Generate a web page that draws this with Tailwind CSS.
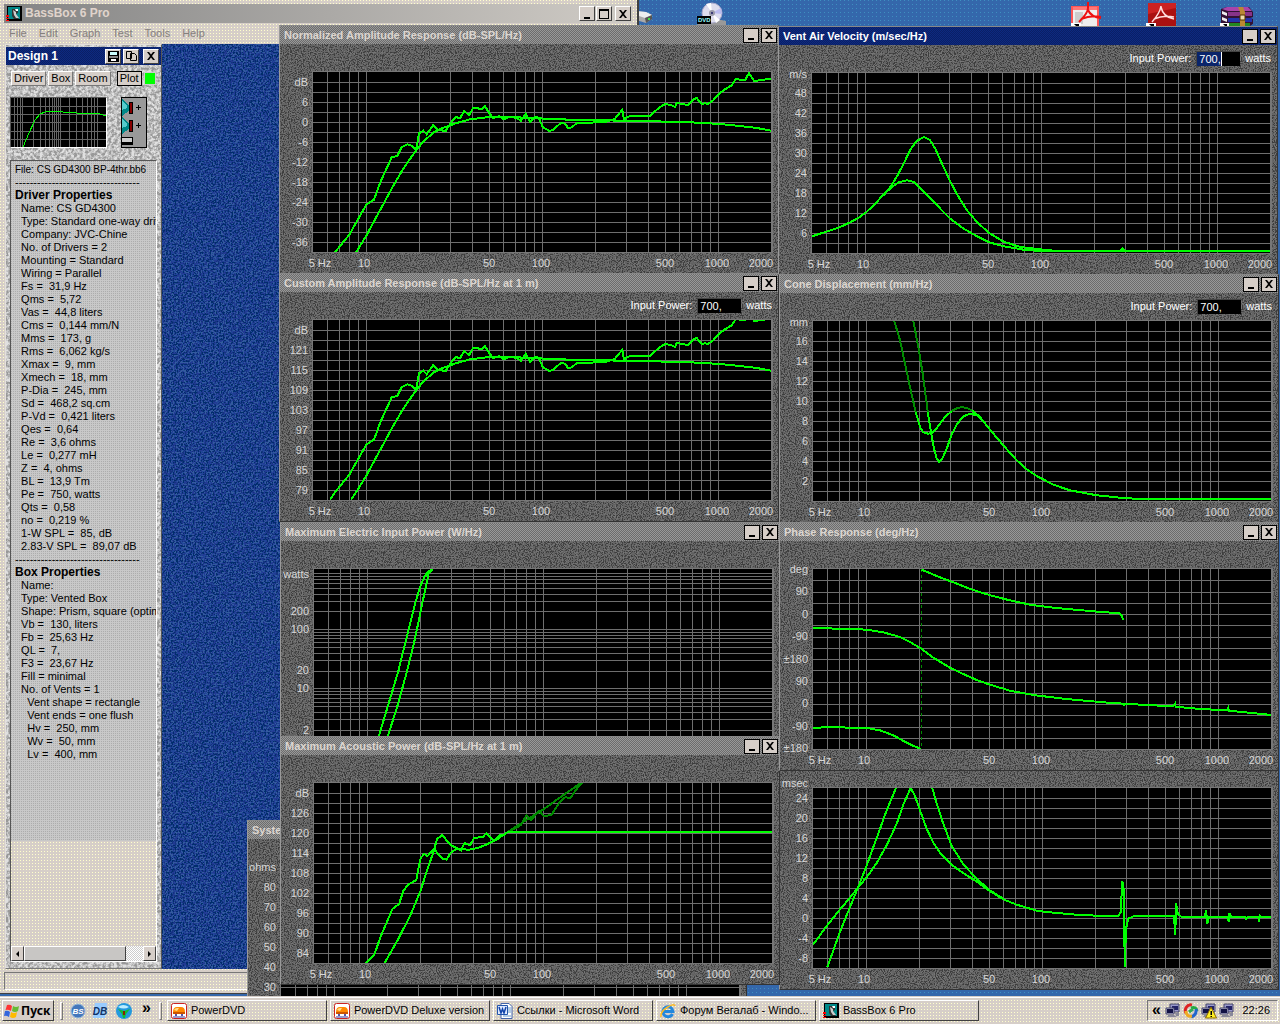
<!DOCTYPE html>
<html lang="ru">
 <head>
  <meta charset="UTF-8"/>
  <meta name="viewport" content="width=device-width, initial-scale=1.0"/>
  <title>BassBox 6 Pro</title>
  <script src="https://cdn.jsdelivr.net/npm/@tailwindcss/browser@4"></script>
 </head>
 <body class="relative h-screen overflow-hidden bg-[#3467ab] bg-[conic-gradient(from_270deg_at_1px_1px,#3e8fc0_90deg,transparent_0)] bg-[length:4px_4px] font-['Liberation_Sans',sans-serif] text-[11px] leading-[13px] text-black">
  <!-- Shared filters and symbols -->
  <svg class="absolute size-0" aria-hidden="true">
   <defs>
    <filter id="speckle" x="0" y="0" width="100%" height="100%" color-interpolation-filters="sRGB">
     <feTurbulence type="fractalNoise" baseFrequency="0.85" numOctaves="2" seed="4"/>
     <feColorMatrix values="3 0 0 0 -1  3 0 0 0 -1  3 0 0 0 -1  0 0 0 0 1"/>
     <feComponentTransfer>
      <feFuncR type="discrete" tableValues=".24 .28 .38 .4 .4 .46"/>
      <feFuncG type="discrete" tableValues=".24 .28 .38 .4 .4 .46"/>
      <feFuncB type="discrete" tableValues=".24 .28 .38 .4 .4 .46"/>
     </feComponentTransfer>
    </filter>
    <filter id="marble" x="0" y="0" width="100%" height="100%" color-interpolation-filters="sRGB">
     <feTurbulence type="fractalNoise" baseFrequency="0.35" numOctaves="3" seed="9"/>
     <feColorMatrix values="3 0 0 0 -1  3 0 0 0 -1  3 0 0 0 -1  0 0 0 0 1"/>
     <feComponentTransfer>
      <feFuncR type="discrete" tableValues=".6 .66 .7 .75 .8 .8 .88"/>
      <feFuncG type="discrete" tableValues=".6 .66 .7 .75 .8 .8 .88"/>
      <feFuncB type="discrete" tableValues=".6 .66 .7 .75 .8 .8 .88"/>
     </feComponentTransfer>
    </filter>
    <filter id="cloth" x="0" y="0" width="100%" height="100%" color-interpolation-filters="sRGB">
     <feTurbulence type="fractalNoise" baseFrequency="0.6" numOctaves="2" seed="2"/>
     <feColorMatrix values="3 0 0 0 -1  3 0 0 0 -1  3 0 0 0 -1  0 0 0 0 1"/>
     <feComponentTransfer>
      <feFuncR type="discrete" tableValues="0 .08 .13 .13 .2"/>
      <feFuncG type="discrete" tableValues=".18 .2 .23 .28 .36"/>
      <feFuncB type="discrete" tableValues=".42 .5 .58 .6 .62"/>
     </feComponentTransfer>
    </filter>
    <symbol id="app" viewBox="0 0 16 16">
     <rect x="1" width="15" height="15" fill="#000"/>
     <rect x="2" y="1" width="12" height="12" fill="#088"/>
     <path d="M6 3h4l2 2v2l-2 1v2l3 3H8L6 10z" fill="#333"/>
     <path d="M7 4l3 2v2l3 4h-3L8 9z" fill="#ccc"/>
     <path d="M9 3h3v2h-2z" fill="#fff"/>
     <path d="M0 9h3v2H0zM0 12h3v1H0zM0 14h3v1H0z" fill="#f00"/>
    </symbol>
    <symbol id="min" viewBox="0 0 12 10">
     <path d="M3 8h6v2H3z" fill="#000"/>
    </symbol>
    <symbol id="max" viewBox="0 0 12 10">
     <path d="M1 0h10v10H1zM2 2v7h8V2z" fill="#000" fill-rule="evenodd"/>
    </symbol>
    <symbol id="cls" viewBox="0 0 12 10">
     <path d="M2 1h2l2 2.500L8 1h2L7 5l3 4H8L6 6.500 4 9H2l3-4z" fill="#000"/>
    </symbol>
    <symbol id="dvd" viewBox="0 0 16 16">
     <rect x=".5" y=".5" width="15" height="15" rx="2" fill="#fff" stroke="#c22"/>
     <path d="M2 9q0-5 4-5h4q4 0 4 5z" fill="#f80"/>
     <path d="M3 7q1-2 3-2h2l-2 3z" fill="#fd8"/>
     <path d="M2 9h12v2H2z" fill="#c50"/>
     <path d="M4 11h2v2H4zM10 11h2v2h-2z" fill="#55a"/>
     <path d="M2 13h12v2H2z" fill="#99c"/>
    </symbol>
    <symbol id="net" viewBox="0 0 16 16">
     <path d="M5 1h9v8H5z" fill="#99c" stroke="#446"/>
     <path d="M7 3h6v4H7z" fill="#226"/>
     <path d="M1 5h8v6H1z" fill="#bbd" stroke="#446"/>
     <path d="M2 6h6v4H2z" fill="#114"/>
     <path d="M3 12h6l3 2H2zM10 10h4v3h-3z" fill="#889"/>
    </symbol>
   </defs>
  </svg>

  <!-- Desktop icons -->
  <svg class="absolute left-[636px] top-[8px]" width="18" height="18" viewBox="0 0 18 18" aria-hidden="true">
   <path d="M0 3l10 1 6 3v4l-6 4-10-3z" fill="#aaa"/><path d="M0 3l10 1 6 3-7 3-9-3z" fill="#eee"/><path d="M9 10l7-3v4l-6 4z" fill="#555"/><path d="M12 10h2v2h-2z" fill="#4d4"/>
  </svg>
  <svg class="absolute left-[696px] top-[2px]" width="32" height="24" viewBox="0 0 32 24" aria-hidden="true">
   <path d="M2 20l14-4 14 3v5H1z" fill="#999"/><circle cx="16" cy="11" r="10" fill="#dde" stroke="#aac"/><path d="M16 11L10 2l5-1zM16 11l8 7-4 3z" fill="#fff"/><path d="M16 11l9-5 1 6z" fill="#bbe"/><circle cx="16" cy="11" r="3" fill="#99a"/><circle cx="16" cy="11" r="1" fill="#226"/>
   <rect x="1" y="14" width="14" height="8" fill="#000"/><text x="2" y="20" font-size="6" font-weight="bold" fill="#9ff">DVD</text>
  </svg>
  <svg class="absolute left-[1071px] top-[2px]" width="32" height="24" viewBox="0 0 32 24" aria-hidden="true">
   <rect x="1" y="5" width="26" height="20" fill="#eee" stroke="#f55" stroke-width="2"/><path d="M2 5h24v3H2z" fill="#f77"/><path d="M4 10h8v12H4z" fill="#ccc"/><path d="M17 0v6q0 5-9 14M17 8q3 7 13 8M10 17q10-4 20-2" fill="none" stroke="#e11" stroke-width="2"/><rect y="21" width="10" height="3" fill="#fff"/><path d="M3 22h5v2H5z" fill="#000"/>
  </svg>
  <svg class="absolute left-[1146px] top-[2px]" width="32" height="24" viewBox="0 0 32 24" aria-hidden="true">
   <rect x="2" y="1" width="28" height="23" fill="#a11"/><path d="M2 1h28v5L2 12z" fill="#c22"/><path d="M15 4q-1 7-9 16M15 5q2 10 13 12M8 17q9-4 20-2" fill="none" stroke="#fdd" stroke-width="1.500"/><rect y="21" width="10" height="3" fill="#fff"/><path d="M3 22h5v2H5z" fill="#000"/>
  </svg>
  <svg class="absolute left-[1220px] top-[6px]" width="34" height="20" viewBox="0 0 34 20" aria-hidden="true">
   <path d="M1 3l6-2h22l4 5v5l-3 1 3 1v5l-3 2H5l-4-3z" fill="#313"/><path d="M2 3l5-2h21l4 4H8z" fill="#a4a"/><path d="M8 6h24v4H8z" fill="#838"/><path d="M8 12h24v4H8z" fill="#23a"/><path d="M8 17h22v3H8z" fill="#282"/><path d="M2 5l5 2v3L2 8zM2 11l5 2v3l-5-2z" fill="#eee"/><path d="M18 1h5l2 5v14h-5V6z" fill="#b83"/><path d="M20 9h5v5h-5z" fill="#eda" stroke="#530"/><rect y="17" width="9" height="3" fill="#fff"/><path d="M3 18h4v2H5z" fill="#000"/>
  </svg>

  <!-- Main application window -->
  <main class="absolute left-0 top-0 flex h-[994px] w-[639px] flex-col border-b border-r-2 border-b-[#404040] border-r-[#404040] bg-[#d6cec8] bg-[conic-gradient(from_270deg_at_1px_1px,#ffffcc_90deg,transparent_0)] bg-[length:3px_3px] px-[4px] pt-[4px]">
   <header class="flex h-[19px] items-center gap-px bg-linear-to-r from-[#858585] to-[#d0ccc6] px-[2px]">
    <svg class="mr-[2px]" width="16" height="16"><use href="#app"/></svg>
    <h1 class="flex-1 text-[12px] font-bold text-[#e0d4cc]">BassBox 6 Pro</h1>
    <button class="flex h-[15px] w-[16px] items-center justify-center border border-r-[#404040] border-b-[#404040] border-t-white border-l-white bg-[#d6cec8]" aria-label="Minimize"><svg width="12" height="10"><use href="#min"/></svg></button>
    <button class="mr-[2px] flex h-[15px] w-[16px] items-center justify-center border border-r-[#404040] border-b-[#404040] border-t-white border-l-white bg-[#d6cec8]" aria-label="Maximize"><svg width="12" height="10"><use href="#max"/></svg></button>
    <button class="flex h-[15px] w-[16px] items-center justify-center border border-r-[#404040] border-b-[#404040] border-t-white border-l-white bg-[#d6cec8]" aria-label="Close"><svg width="12" height="10"><use href="#cls"/></svg></button>
   </header>
   <nav class="flex h-[21px] items-center gap-[12px] px-[5px] text-[#85807c]">
    <a href="#">File</a>
    <a href="#">Edit</a>
    <a href="#">Graph</a>
    <a href="#">Test</a>
    <a href="#">Tools</a>
    <a href="#">Help</a>
   </nav>
   <div class="relative ml-px flex min-h-0 flex-1">
    <svg class="absolute inset-0 size-full" aria-hidden="true"><rect width="100%" height="100%" filter="url(#cloth)"/></svg>

    <!-- Design window -->
    <section class="relative flex w-[157px] flex-col border border-[#e4e0dc] border-r-[#555] border-b-[#777]">
     <svg class="absolute inset-0 size-full" aria-hidden="true"><rect width="100%" height="100%" filter="url(#marble)"/></svg>
     <header class="relative mt-[2px] flex h-[18px] items-center gap-[2px] bg-[#0c2474] bg-[repeating-conic-gradient(#0a1f66_0_25%,#0d2a80_0_50%)] bg-[length:2px_2px] px-[2px]">
      <h2 class="flex-1 text-[12px] font-bold text-white">Design 1</h2>
      <button class="flex h-[15px] w-[16px] items-center justify-center border border-t-white border-l-white border-r-[#404040] border-b-[#404040] bg-[#d6cec8]" aria-label="Save">
       <svg width="11" height="11" viewBox="0 0 11 11"><path d="M0 0h11v11H0z"/><path d="M2 1h7v3H2z" fill="#cff"/><path d="M1 5h9v2H1z" fill="#888"/><path d="M3 8h5v2H3z" fill="#fff"/></svg>
      </button>
      <button class="flex h-[15px] w-[16px] items-center justify-center border border-t-white border-l-white border-r-[#404040] border-b-[#404040] bg-[#d6cec8]" aria-label="Copy">
       <svg width="11" height="11" viewBox="0 0 11 11"><path d="M.5.5h5v7h-5zM4.500 2.500h4l2 2v5h-6z" fill="#d6cec8" stroke="#000"/></svg>
      </button>
      <button class="ml-[2px] flex h-[15px] w-[16px] items-center justify-center border border-t-white border-l-white border-r-[#404040] border-b-[#404040] bg-[#d6cec8]" aria-label="Close design"><svg width="12" height="10"><use href="#cls"/></svg></button>
     </header>
     <div class="relative mt-[6px] flex items-center gap-[2px] px-[5px] text-[11px]">
      <button class="h-[15px] border border-t-white border-l-white border-r-[#777] border-b-[#777] bg-[#d6cec8] px-[2px]">Driver</button>
      <button class="h-[15px] border border-t-white border-l-white border-r-[#777] border-b-[#777] bg-[#d6cec8] px-[2px]">Box</button>
      <button class="h-[15px] border border-t-white border-l-white border-r-[#777] border-b-[#777] bg-[#d6cec8] px-[2px]">Room</button>
      <button class="ml-[4px] h-[15px] border border-black bg-[#d6cec8] px-[2px]">Plot</button>
      <button class="size-[13px] border border-[#ccc] bg-[#00ff00]" aria-label="Plot color"></button>
     </div>
     <div class="relative mt-[11px] flex gap-[14px] px-[4px]">
      <svg class="border border-t-[#555] border-l-[#555] border-r-white border-b-white bg-black" width="97" height="51" viewBox="0 0 95 49" shape-rendering="crispEdges" aria-label="Response preview">
       <path d="M0 8.500h95M0 16.500h95M0 24.500h95M0 33.500h95M0 41.500h95M3.500 0v49M6.500 0v49M9.500 0v49M11.500 0v49M22.500 0v49M29.500 0v49M34.500 0v49M38.500 0v49M41.500 0v49M43.500 0v49M45.500 0v49M47.500 0v49M49.500 0v49M58.500 0v49M65.500 0v49M71.500 0v49M76.500 0v49M80.500 0v49M83.500 0v49M86.500 0v49" stroke="#666" fill="none"/>
       <path d="M12 49L18 35L24 22L29 16L34 14L40 13L52 14L64 14L66 15L86 15L92 17L95 17" stroke="#0f0" fill="none"/>
      </svg>
      <svg width="26" height="51" viewBox="0 0 26 51" shape-rendering="crispEdges" aria-label="Enclosure layout">
       <rect x=".5" y=".5" width="25" height="50" fill="#999" stroke="#000"/>
       <path d="M1 2l7 6v6l-7 5zM1 20l7 6v6l-7 5z" fill="#088"/>
       <path d="M1 4l5 5v2l-5 2zM1 22l5 5v2l-5 2z" fill="#5cc"/>
       <path d="M8.500 5.500h3v11h-3zM8.500 23.500h3v11h-3z" fill="#800" stroke="#000"/>
       <path d="M15 10.500h5M17.500 8v5M15 28.500h5M17.500 26v5" stroke="#000"/>
       <path d="M.5 40.500h11v7H.5z" fill="#ccc" stroke="#000"/><path d="M1 45h11v3H1z"/>
      </svg>
     </div>
     <div class="relative mx-[4px] mt-[12px] mb-[6px] flex min-h-0 flex-1 flex-col border border-t-[#555] border-l-[#555] border-r-white border-b-white bg-[#d6cec8] bg-[conic-gradient(from_270deg_at_1px_1px,#ffffcc_90deg,transparent_0)] bg-[length:3px_3px]">
      <div id="props" class="h-[680px] overflow-hidden bg-[#c8c8c8] bg-[conic-gradient(from_270deg_at_1px_1px,#acacac_90deg,transparent_0)] bg-[length:2px_2px] pl-[4px] pt-[2px] whitespace-pre"></div>
      <div class="mt-auto flex h-[15px] bg-[repeating-conic-gradient(#ccc_0_25%,#fff_0_50%)] bg-[length:2px_2px]" role="scrollbar" aria-label="Horizontal scroll" aria-controls="props">
       <button class="flex w-[13px] items-center justify-center border border-t-white border-l-white border-r-[#404040] border-b-[#404040] bg-[#d6cec8]" aria-label="Scroll left"><svg width="5" height="6"><path d="M4 0v6L1 3z"/></svg></button>
       <span class="w-[102px] border border-t-white border-l-white border-r-[#404040] border-b-[#404040] bg-[#c8c6c4]"></span>
       <button class="ml-auto flex w-[13px] items-center justify-center border border-t-white border-l-white border-r-[#404040] border-b-[#404040] bg-[#d6cec8]" aria-label="Scroll right"><svg width="5" height="6"><path d="M1 0v6l3-3z"/></svg></button>
      </div>
     </div>
    </section>
   </div>
   <footer class="mt-[3px] mb-[3px] h-[18px] border border-t-[#777] border-l-[#777] border-r-white border-b-white"></footer>
  </main>

  <!-- Graph windows, drawn back to front -->
  <div id="graphs"></div>

  <!-- Taskbar -->
  <footer class="absolute inset-x-0 bottom-0 flex h-[28px] items-center border-t border-[#d6cec8] bg-[#d6cec8] bg-[conic-gradient(from_270deg_at_1px_1px,#ffffcc_90deg,transparent_0)] bg-[length:3px_3px] px-[2px] shadow-[inset_0_1px_0_#fff]">
   <button class="flex h-[21px] w-[52px] items-center gap-px border border-t-white border-l-white border-r-[#404040] border-b-[#404040] bg-[#d6cec8] px-px font-['Noto_Sans',sans-serif] text-[12px] font-bold">
    <svg width="16" height="16" viewBox="0 0 16 16"><path d="M3 2q3-1 5 1L7 8Q4 6 1.500 7z" fill="#f33"/><path d="M9 3q3 2 6 0l-1 5q-3 2-6 0z" fill="#6b3"/><path d="M1 8q3-1 5 1l-1 5q-3-2-5-1z" fill="#36d"/><path d="M7 9q3 2 6 0l-1 5q-3 2-6 0z" fill="#fb0"/></svg>
    Пуск
   </button>
   <span class="ml-[6px] h-[18px] w-[3px] border border-t-white border-l-white border-r-[#777] border-b-[#777]"></span>
   <a href="#" class="ml-[6px]" aria-label="BS Player"><svg width="18" height="18" viewBox="0 0 18 18"><circle cx="9" cy="9" r="7" fill="#47b" stroke="#9bd"/><text x="9" y="12" text-anchor="middle" font-size="8" font-weight="bold" font-style="italic" fill="#fff">BS</text></svg></a>
   <a href="#" class="ml-[5px]" aria-label="DB"><svg width="18" height="18" viewBox="0 0 18 18"><path d="M3 1h12l-2 15H1z" fill="#9cf"/><text x="8" y="13" text-anchor="middle" font-size="10" font-weight="bold" font-style="italic" fill="#136">DB</text></svg></a>
   <a href="#" class="ml-[5px]" aria-label="Download Master"><svg width="18" height="18" viewBox="0 0 18 18"><circle cx="9" cy="9" r="8" fill="#29d"/><path d="M3 5q5-4 11 0-5 3-11 0z" fill="#bef"/><path d="M3 7l6 2 6-2-4 5-1 4H8l-1-4z" fill="#1b3"/><path d="M8 9h2v4H8z" fill="#820"/></svg></a>
   <button class="ml-[9px] pb-[6px] text-[16px] font-bold" aria-label="More">»</button>
   <span class="ml-[8px] mr-[5px] h-[18px] w-[3px] border border-t-white border-l-white border-r-[#777] border-b-[#777]"></span>
   <nav class="flex min-w-0 flex-1 gap-[3px]">
    <button class="flex h-[21px] w-[160px] items-center gap-[4px] border border-t-white border-l-white border-r-[#404040] border-b-[#404040] px-[3px]"><svg class="shrink-0" width="16" height="16"><use href="#dvd"/></svg><span class="truncate">PowerDVD</span></button>
    <button class="flex h-[21px] w-[160px] items-center gap-[4px] border border-t-white border-l-white border-r-[#404040] border-b-[#404040] px-[3px]"><svg class="shrink-0" width="16" height="16"><use href="#dvd"/></svg><span class="truncate">PowerDVD Deluxe version</span></button>
    <button class="flex h-[21px] w-[160px] items-center gap-[4px] border border-t-white border-l-white border-r-[#404040] border-b-[#404040] px-[3px]">
     <svg class="shrink-0" width="16" height="16" viewBox="0 0 16 16"><path d="M4 .5h8l3 3v12H4z" fill="#fff" stroke="#46a"/><path d="M11 5h3M11 7h3M11 9h3M6 13h8" stroke="#69c"/><path d="M.5 2.500h10v9H.5z" fill="#dde8ff" stroke="#25a"/><path d="M2 4l2 6 1.500-4L7 10l2-6" fill="none" stroke="#14a" stroke-width="1.500"/></svg>
     <span class="truncate">Ссылки - Microsoft Word</span></button>
    <button class="flex h-[21px] w-[160px] items-center gap-[4px] border border-t-white border-l-white border-r-[#404040] border-b-[#404040] px-[3px]">
     <svg class="shrink-0" width="16" height="16" viewBox="0 0 16 16"><path d="M12.500 11A5 5 0 1 1 13 8.500H4" fill="none" stroke="#28d" stroke-width="3"/><path d="M1 14Q0 9 7 4.500T15 3" fill="none" stroke="#fb2" stroke-width="1.500"/></svg>
     <span class="truncate">Форум Вегалаб - Windo...</span></button>
    <button class="flex h-[21px] w-[160px] items-center gap-[4px] border border-t-white border-l-white border-r-[#404040] border-b-[#404040] px-[3px]"><svg class="shrink-0" width="16" height="16"><use href="#app"/></svg><span class="truncate">BassBox 6 Pro</span></button>
   </nav>
   <div class="flex h-[21px] w-[131px] items-center gap-[2px] border border-t-[#777] border-l-[#777] border-r-white border-b-white pl-[4px]">
    <button class="mr-[2px] pb-[2px] text-[16px] font-bold" aria-label="Show hidden icons">«</button>
    <svg width="16" height="16"><use href="#net"/></svg>
    <svg width="16" height="16" viewBox="0 0 16 16"><g fill="none" stroke-width="3"><path d="M3 10A5.500 5.500 0 0 1 9 2" stroke="#d22"/><path d="M8 5q5-2 6 3" stroke="#2a4"/><path d="M13 6q1 6-5 8" stroke="#26c"/><path d="M3 8q0 6 6 5" stroke="#ea2"/><path d="M6 9l4-3" stroke="#3a5"/></g></svg>
    <svg width="16" height="16" viewBox="0 0 16 16"><use href="#net" width="16" height="16"/><path d="M10 4l5.500 11h-11z" fill="#fe2" stroke="#860"/><path d="M9.500 8h1.500v4H9.500zM9.500 13h1.500v1H9.500z"/></svg>
    <svg width="16" height="16"><use href="#net"/></svg>
    <time class="ml-auto mr-[7px]">22:26</time>
   </div>
  </footer>

  <script>
   const props = [
     'File: CS GD4300 BP-4thr.bb6', '-', '#Driver Properties',
     '  Name: CS GD4300', '  Type: Standard one-way driver', '  Company: JVC-Chine', '  No. of Drivers = 2',
     '  Mounting = Standard', '  Wiring = Parallel', '  Fs =  31,9 Hz', '  Qms =  5,72', '  Vas =  44,8 liters',
     '  Cms =  0,144 mm/N', '  Mms =  173, g', '  Rms =  6,062 kg/s', '  Xmax =  9, mm', '  Xmech =  18, mm',
     '  P-Dia =  245, mm', '  Sd =  468,2 sq.cm', '  P-Vd =  0,421 liters', '  Qes =  0,64', '  Re =  3,6 ohms',
     '  Le =  0,277 mH', '  Z =  4, ohms', '  BL =  13,9 Tm', '  Pe =  750, watts', '  Qts =  0,58', '  no =  0,219 %',
     '  1-W SPL =  85, dB', '  2.83-V SPL =  89,07 dB', '-', '#Box Properties',
     '  Name:', '  Type: Vented Box', '  Shape: Prism, square (optimum)', '  Vb =  130, liters', '  Fb =  25,63 Hz',
     '  QL =  7,', '  F3 =  23,67 Hz', '  Fill = minimal', '  No. of Vents = 1', '    Vent shape = rectangle',
     '    Vent ends = one flush', '    Hv =  250, mm', '    Wv =  50, mm', '    Lv =  400, mm'
   ];
   document.getElementById('props').innerHTML = props.map((line, i) => {
     if (line === '-') return '<p>' + '-'.repeat(34) + '</p>';
     if (line[0] === '#') return `<h3 class="text-[12px] font-bold">${line.slice(1)}</h3>`;
     if (i === 0) return `<p class="text-[10px]">${line}</p>`;
     return `<p>${line}</p>`;
   }).join('');

   // evenly spaced axis labels: first offset, step, texts
   const axis = (start, step, texts) => texts.map((t, i) => [t, start + i * step]);
   const tens = Array.from({ length: 17 }, (_, i) => (i + 1) * 10);

   const flat = [[243,778],[260,753],[289,706],[330,630],[370,556],[400,505],[438,450],[460,424],[490,397],[520,382],[560,368],[600,357],[650,351],[720,350],[800,354],[900,358],[1000,360],[1100,362],[1200,364],[1290,367],[1350,371],[1410,377],[1460,383],[1504,391]];
   const measured = [[180,778],[197,753],[238,703],[265,655],[289,613],[312,598],[330,548],[365,471],[382,467],[395,440],[413,432],[428,438],[438,450],[447,399],[460,391],[470,402],[490,374],[502,388],[527,392],[545,364],[558,350],[570,354],[583,332],[597,345],[610,322],[635,326],[645,318],[658,338],[668,353],[688,348],[702,357],[715,350],[740,352],[752,362],[767,340],[780,365],[795,350],[806,352],[818,380],[838,392],[850,388],[872,368],[885,370],[895,384],[907,380],[920,368],[960,367],[1010,364],[1035,355],[1057,328],[1062,358],[1070,350],[1080,348],[1140,346],[1170,320],[1185,312],[1200,313],[1215,320],[1220,307],[1255,315],[1268,299],[1280,293],[1295,312],[1305,308],[1312,312],[1330,300],[1345,282],[1365,267],[1385,255],[1397,236],[1425,240],[1437,218],[1452,242],[1504,235]];

   const logRows = [];
   for (const d of [1, 10, 100]) for (let n = 1; n < 10; n++) logRows.push(1 + 59.2 * (3 - Math.log10(d * n)));

   const graphs = [
     { title: 'System Impedance (ohms/Hz)', pos: 'left-[247px] top-[820px]', rows: tens,
       labels: axis(0, 20, ['ohms', '80', '70', '60', '50', '40', '30']), origin: [0, 0], traces: [] },
     { title: 'Group Delay (msec/Hz)', pos: 'left-[779px] top-[741px]', rows: tens,
       labels: [['msec', -5], ...axis(10, 20, ['24', '20', '16', '12', '8', '4', '0', '-4', '-8'])], origin: [129, 68],
       traces: [
         { pts: [[129,538],[172,480],[208,435],[240,397],[265,365],[290,336],[320,293],[350,240],[380,175],[400,118],[422,68],[435,92],[450,135],[470,190],[490,232],[510,262],[545,299],[580,323],[620,349],[658,376],[700,402],[740,418],[800,436],[850,442],[920,448],[1000,452],[1045,452],[1052,440],[1057,348],[1062,375],[1064,606],[1068,490],[1075,460],[1090,453],[1212,453],[1216,508],[1218,412],[1223,445],[1235,455],[1305,455],[1308,434],[1312,475],[1317,455],[1373,456],[1376,469],[1378,443],[1384,456],[1425,456],[1428,460],[1432,456],[1465,456],[1467,463],[1470,452],[1474,456],[1504,456]] },
         { pts: [[172,606],[208,505],[240,425],[265,365],[290,300],[320,218],[350,135],[378,68]] },
         { pts: [[487,68],[500,115],[520,175],[545,242],[580,297],[620,340],[658,374],[700,400]] }
       ] },
     { title: 'Normalized Amplitude Response (dB-SPL/Hz)', pos: 'left-[279px] top-[25px]', rows: tens,
       labels: axis(10, 20, ['dB', '6', '0', '-6', '-12', '-18', '-24', '-30', '-36']), origin: [129, 215],
       traces: [{ pts: flat }, { pts: measured }] },
     { title: 'Custom Amplitude Response (dB-SPL/Hz at 1 m)', pos: 'left-[279px] top-[273px]', rows: tens, power: true,
       labels: axis(10, 20, ['dB', '121', '115', '109', '103', '97', '91', '85', '79']), origin: [129, 239],
       traces: [{ pts: flat }, { pts: measured }] },
     { title: 'Maximum Electric Input Power (W/Hz)', pos: 'left-[280px] top-[522px]', rows: logRows,
       labels: [['watts', 5], ['200', 42], ['100', 60], ['20', 101], ['10', 119], ['2', 161]], origin: [0, 0],
       traces: [
         { pts: [[195,500],[227,392],[253,307],[274,222],[289,162],[305,97],[320,49],[331,24],[341,9],[356,0]] },
         { pts: [[222,500],[253,402],[279,307],[300,222],[315,152],[325,102],[336,52],[344,12],[356,0]] }
       ] },
     { title: 'Maximum Acoustic Power (dB-SPL/Hz at 1 m)', pos: 'left-[280px] top-[736px]', rows: tens,
       labels: axis(10, 20, ['dB', '126', '120', '114', '108', '102', '96', '90', '84']), origin: [215, 143], unit: 2.904,
       traces: [
         { dim: true, pts: [[776,291],[815,270],[832,240],[845,255],[868,226],[882,243],[905,238],[930,198],[945,186],[960,188],[985,150],[995,143]] },
         { dim: true, pts: [[776,291],[830,255],[882,222],[930,186],[990,143]] },
         { pts: [[365,683],[390,658],[410,600],[443,521],[462,506],[475,465],[490,447],[512,434],[518,400],[525,368],[535,356],[545,362],[565,338],[572,352],[590,370],[600,373],[612,352],[630,340],[642,345],[652,323],[668,330],[680,308],[705,305],[715,294],[738,316],[755,300],[768,298],[776,291],[1546,291]] },
         { pts: [[420,683],[460,610],[495,540],[525,465],[545,400],[562,350],[572,312],[587,299],[600,315],[617,332],[635,341],[665,343],[690,338],[715,328],[745,313],[776,291]] }
       ] },
     { title: 'Vent Air Velocity (m/sec/Hz)', pos: 'left-[778px] top-[26px]', rows: tens, power: true, active: true,
       labels: [['m/s', 1], ...axis(20, 20, ['48', '42', '36', '30', '24', '18', '12', '6'])], origin: [125, 218],
       traces: [
         { pts: [[125,708],[165,695],[205,682],[240,666],[265,652],[286,637],[315,610],[340,582],[365,560],[385,546],[410,540],[430,545],[450,565],[486,600],[520,636],[540,655],[580,685],[620,708],[656,726],[700,738],[760,748],[820,753],[1500,753]] },
         { pts: [[340,585],[360,560],[380,528],[400,490],[420,448],[438,423],[460,410],[478,418],[495,445],[515,490],[538,540],[560,582],[590,630],[620,665],[655,697],[700,724],[750,740],[800,746],[850,751],[1048,752],[1056,744],[1064,752],[1500,752]] }
       ] },
     { title: 'Cone Displacement (mm/Hz)', pos: 'left-[779px] top-[274px]', rows: tens, power: true,
       labels: [['mm', 1], ...axis(20, 20, ['16', '14', '12', '10', '8', '6', '4', '2'])], origin: [129, 152],
       traces: [
         { dim: true, pts: [[373,152],[390,210],[405,280],[420,350],[437,425]] },
         { dim: true, pts: [[430,152],[445,230],[458,310],[470,400],[473,425]] },
         { pts: [[437,425],[450,470],[460,486],[475,490],[485,488],[500,473],[525,440],[545,422]] },
         { dim: true, pts: [[545,422],[560,414],[575,410],[590,413],[607,421]] },
         { pts: [[607,421],[630,440],[660,478],[700,525],[740,570],[770,597],[800,617],[850,643],[900,660],[980,675],[1060,683],[1130,687],[1504,687]] },
         { pts: [[473,425],[483,485],[492,535],[500,565],[508,575],[517,565],[530,535],[545,492],[560,463],[580,438],[600,430],[620,435],[640,452],[660,478]] }
       ] },
     { title: 'Phase Response (deg/Hz)', pos: 'left-[779px] top-[522px]', rows: Array.from({ length: 15 }, (_, i) => (i + 1) * 11.25),
       labels: axis(0, 22.4, ['deg', '90', '0', '-90', '±180', '90', '0', '-90', '±180']), origin: [129, 146],
       traces: [
         { dim: true, dash: true, pts: [[455,146],[455,686]] },
         { pts: [[455,148],[500,167],[545,184],[607,208],[658,224],[715,239],[780,253],[850,262],[960,272],[1048,279],[1055,286],[1060,298]] },
         { pts: [[129,324],[240,325],[290,328],[340,336],[390,350],[425,368],[455,386],[490,412],[540,442],[580,461],[620,479],[660,493],[720,511],[790,524],[880,535],[1000,546],[1061,550],[1062,556],[1064,550],[1130,554],[1210,558],[1215,550],[1217,559],[1290,566],[1373,570],[1375,564],[1377,571],[1504,584]] },
         { pts: [[129,624],[160,621],[285,622],[330,630],[370,645],[410,667],[430,677],[452,685]] }
       ] }
   ];

   // 5 Hz .. 2000 Hz, 176 px per decade
   const freqX = f => Math.round(176 * Math.log10(f / 5));
   const cols = [];
   for (const d of [1, 10, 100, 1000]) for (let n = 1; n < 10; n++) if (d * n > 5 && d * n < 2000) cols.push(d * n);

   function chart(g) {
     const k = g.unit || 3;
     const grid = cols.map(f => `M${freqX(f) + 0.5} 0v180`).join('') + g.rows.map(y => `M0 ${Math.round(y) + 0.5}h458`).join('');
     const traces = g.traces.map(t => {
       const pts = t.pts.map(([x, y]) => `${((x - g.origin[0]) / k).toFixed(1)},${((y - g.origin[1]) / 3).toFixed(1)}`).join(' ');
       return `<polyline points="${pts}" fill="none" stroke="${t.dim ? '#008c00' : '#00ff00'}" stroke-width="${t.dash ? 1 : 2}"${t.dash ? ' stroke-dasharray="3 3"' : ''}/>`;
     }).join('');
     const ys = g.labels.map(([t, y]) => `<text x="28" y="${Math.round(y) + 32}" text-anchor="end">${t}</text>`).join('');
     const xs = [['5 Hz', 40], ['10', 84], ['50', 209], ['100', 261], ['500', 385], ['1000', 437], ['2000', 481]]
       .map(([t, x]) => `<text x="${x}" y="223" text-anchor="middle">${t}</text>`).join('');
     return `<svg class="block w-full" height="229" aria-label="${g.title}">
       <rect width="100%" height="100%" filter="url(#speckle)"/>
       <rect x="32" y="27" width="461" height="182" fill="#777"/>
       <svg x="33" y="28" width="458" height="180" shape-rendering="crispEdges">
         <rect width="458" height="180" fill="#000"/>
         <path d="${grid}" stroke="#6e6e6e" fill="none"/>${traces}
       </svg>
       <g font-size="11" fill="#d8d8d8">${ys}${xs}</g>
     </svg>`;
   }

   function power(g, i) {
     if (!g.power) return '';
     const box = g.active
       ? 'bg-[linear-gradient(90deg,#0a246a_24px,#fff_24px,#fff_25px,#000_25px)]'
       : 'bg-black';
     return `<div class="absolute right-[6px] top-[6px] flex items-center gap-[5px] text-white">
       <label for="power${i}">Input Power:</label>
       <input id="power${i}" type="text" value="700," class="h-[15px] w-[44px] border-t border-l border-[#444] pl-[2px] text-white outline-none ${box}"/>
       <span>watts</span>
     </div>`;
   }

   document.getElementById('graphs').innerHTML = graphs.map((g, i) => {
     const bar = g.active
       ? 'bg-[repeating-conic-gradient(#0a1f66_0_25%,#0d2a80_0_50%)] text-white'
       : 'bg-[repeating-conic-gradient(#6c6c6c_0_25%,#999_0_50%)] text-[#dcd6d0]';
     return `<section class="absolute ${g.pos} w-[500px] border border-t-[#888] border-l-[#999] border-r-[#333] border-b-[#333] bg-[#555]">
       <header class="flex h-[18px] items-center gap-[2px] bg-[length:2px_2px] pl-[4px] pr-px ${bar}">
         <h2 class="flex-1 font-bold">${g.title}</h2>
         <button class="flex h-[15px] w-[16px] items-center justify-center border border-black bg-[#d6cec8]" aria-label="Minimize"><svg width="12" height="10"><use href="#min"/></svg></button>
         <button class="flex h-[15px] w-[16px] items-center justify-center border border-black bg-[#d6cec8]" aria-label="Close"><svg width="12" height="10"><use href="#cls"/></svg></button>
       </header>
       <div class="relative">${chart(g)}${power(g, i)}</div>
     </section>`;
   }).join('');
  </script>
 </body>
</html>
